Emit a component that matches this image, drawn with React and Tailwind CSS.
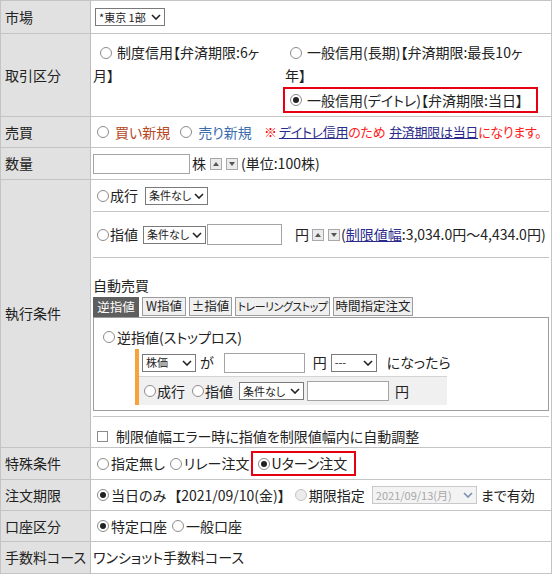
import React from 'react';

const Radio = ({ checked, disabled, className = '' }) => (
  <span
    className={`inline-flex items-center justify-center shrink-0 w-[12px] h-[12px] rounded-full border ${
      disabled ? 'border-[#c4c4c4] bg-[#ececec]' : 'border-[#8c8c8c] bg-white'
    } ${className}`}
  >
    {checked && <span className="w-[6px] h-[6px] rounded-full bg-[#222]" />}
  </span>
);

const Chevron = ({ color = '#222' }) => (
  <svg width="10" height="6" viewBox="0 0 10 6" className="shrink-0">
    <path d="M1 1L5 5L9 1" fill="none" stroke={color} strokeWidth="1.6" />
  </svg>
);

const Select = ({ label, className = '', disabled }) => (
  <span
    className={`inline-flex items-center justify-between shrink-0 h-[18px] border px-[3px] text-[11px] leading-none ${
      disabled ? 'border-[#c8c8c8] bg-[#f3f3f3] text-[#a8a8a8]' : 'border-[#7a7a7a] bg-white text-[#222]'
    } ${className}`}
  >
    <span className="whitespace-nowrap">{label}</span>
    <Chevron color={disabled ? '#7d8fb0' : '#222'} />
  </span>
);

const Input = ({ className = '' }) => (
  <span className={`inline-block shrink-0 h-[20px] border border-[#a4a4a4] bg-white ${className}`} />
);

const Spin = ({ up, className = '' }) => (
  <span
    className={`inline-flex items-center justify-center shrink-0 w-[12px] h-[12px] border border-[#a8a8a8] bg-[#ebebeb] ${className}`}
  >
    <svg width="6" height="4" viewBox="0 0 6 4">
      <path d={up ? 'M0 4L3 0L6 4Z' : 'M0 0L3 4L6 0Z'} fill="#555" />
    </svg>
  </span>
);

const Row = ({ label, h, children, className = '' }) => (
  <div className={`flex border-b border-[#c4c4c4] ${h}`}>
    <div className="w-[90px] shrink-0 bg-[#e1e1e1] border-r border-[#bdbdbd] flex items-center pl-[4px] whitespace-nowrap">
      {label}
    </div>
    <div className={`flex-1 min-w-0 ${className}`}>{children}</div>
  </div>
);

const Tab = ({ children, active, className = '', size = 'text-[12.5px]' }) => (
  <span
    className={`inline-flex items-center justify-center shrink-0 overflow-hidden whitespace-nowrap ${size} ${
      active
        ? 'h-[20px] bg-[#5e5e5e] text-white border border-[#5e5e5e]'
        : 'h-[19px] mb-[1px] bg-[#f0f0f0] border border-[#9c9c9c] text-[#222]'
    } ${className}`}
  >
    {children}
  </span>
);

export default function App() {
  return (
    <div className="w-[552px] h-[574px] overflow-hidden bg-white text-[14px] text-[#222] font-['Noto_Sans_CJK_JP',sans-serif] [font-feature-settings:'palt'] border-l border-r border-t border-[#c4c4c4]">
      <Row label="市場" h="h-[33px]" className="flex items-center pl-[4px]">
        <Select label="*東京 1部" className="w-[70px] h-[17px]" />
      </Row>

      <Row label="取引区分" h="h-[83px]" className="grid grid-cols-[192px_1fr] pt-[7px] leading-[23px]">
        <div>
          <div className="flex items-center h-[23px] pl-[9px] whitespace-nowrap">
            <Radio className="mr-[5px]" />
            <span>制度信用【弁済期限:6ヶ</span>
          </div>
          <div className="h-[23px] pl-[2px]">月】</div>
        </div>
        <div>
          <div className="flex items-center h-[23px] pl-[7px] whitespace-nowrap">
            <Radio className="mr-[5px]" />
            <span>一般信用(長期)【弁済期限:最長10ヶ</span>
          </div>
          <div className="h-[23px] pl-[2px]">年】</div>
          <div className="flex items-center h-[26px] w-[255px] border-2 border-[#e60012] pl-[5px] whitespace-nowrap">
            <Radio checked className="mr-[5px]" />
            <span>一般信用(デイトレ)【弁済期限:当日】</span>
          </div>
        </div>
      </Row>

      <Row label="売買" h="h-[31px]" className="flex items-center pl-[6px] whitespace-nowrap">
        <Radio className="mr-[6px]" />
        <span className="text-[#b8461e]">買い新規</span>
        <Radio className="ml-[10px] mr-[6px]" />
        <span className="text-[#3b6cb0]">売り新規</span>
        <span className="ml-[12px] text-[#ff0000] text-[13px]">※</span>
        <span className="ml-[2px] text-[13px] tracking-[-0.3px]">
          <span className="text-[#2b2b8c] underline">デイトレ信用</span>
          <span className="text-[#ff2020]">のため</span>
          <span className="ml-[4px] text-[#2b2b8c] underline">弁済期限は当日</span>
          <span className="text-[#ff2020]">になります。</span>
        </span>
      </Row>

      <Row label="数量" h="h-[32px]" className="flex items-center pl-[2px] whitespace-nowrap">
        <Input className="w-[97px]" />
        <span className="ml-[2px]">株</span>
        <Spin up className="ml-[4px]" />
        <Spin className="ml-[4px]" />
        <span className="ml-[3px]">(単位:100株)</span>
      </Row>

      <Row label="執行条件" h="h-[268px]" className="flex flex-col px-[2px]">
        <div className="h-[32px] shrink-0 border-b border-[#c4c4c4] flex items-center pl-[4px] whitespace-nowrap">
          <Radio className="mr-[1px]" />
          <span>成行</span>
          <Select label="条件なし" className="ml-[7px] w-[63px]" />
        </div>

        <div className="h-[46px] shrink-0 border-b border-[#c4c4c4] flex items-center pl-[4px] whitespace-nowrap">
          <Radio className="mr-[1px]" />
          <span>指値</span>
          <Select label="条件なし" className="ml-[5px] w-[63px]" />
          <Input className="ml-[1px] w-[75px] h-[21px]" />
          <span className="ml-[13px]">円</span>
          <Spin up className="ml-[3px]" />
          <Spin className="ml-[4px]" />
          <span className="ml-[1px]">
            (<span className="text-[#2b2b8c] underline">制限値幅</span>:3,034.0円〜4,434.0円)
          </span>
        </div>

        <div className="h-[159px] shrink-0 border-b border-[#c4c4c4] pt-[19px]">
          <div className="leading-[16px] whitespace-nowrap">自動売買</div>
          <div className="flex items-end gap-[3px] mt-[4px] h-[20px]">
            <Tab active className="w-[46px]">逆指値</Tab>
            <Tab className="w-[44px]">W指値</Tab>
            <Tab className="w-[43px]">±指値</Tab>
            <Tab className="w-[95px] tracking-[-0.5px]" size="text-[11px]">トレーリングストップ</Tab>
            <Tab className="w-[80px]">時間指定注文</Tab>
          </div>
          <div className="h-[94px] border border-[#9c9c9c] bg-white">
            <div className="flex items-center h-[20px] mt-[9px] pl-[9px] whitespace-nowrap">
              <Radio className="mr-[2px]" />
              <span>逆指値(ストップロス)</span>
            </div>
            <div className="ml-[41px] mt-[2px] w-[312px] border-l-4 border-[#f8a23a]">
              <div className="h-[28px] border-b border-[#d4d4d4] flex items-center pl-[3px] whitespace-nowrap">
                <Select label="株価" className="w-[54px]" />
                <span className="ml-[4px]">が</span>
                <Input className="ml-[10px] w-[81px]" />
                <span className="ml-[8px]">円</span>
                <Select label="---" className="ml-[4px] w-[46px] h-[17px]" />
                <span className="ml-[10px]">になったら</span>
              </div>
              <div className="h-[28px] bg-[#f0f0f0] flex items-center pl-[5px] whitespace-nowrap">
                <Radio className="mr-[1px]" />
                <span>成行</span>
                <Radio className="ml-[7px] mr-[1px]" />
                <span>指値</span>
                <Select label="条件なし" className="ml-[6px] w-[65px]" />
                <Input className="ml-[3px] w-[82px]" />
                <span className="ml-[6px]">円</span>
              </div>
            </div>
          </div>
        </div>

        <div className="h-[30px] shrink-0 flex items-center pl-[4px] pt-[8px] whitespace-nowrap">
          <span className="inline-block w-[11px] h-[11px] border border-[#8c8c8c] bg-white mr-[8px]" />
          <span>制限値幅エラー時に指値を制限値幅内に自動調整</span>
        </div>
      </Row>

      <Row label="特殊条件" h="h-[32px]" className="flex items-center pl-[6px] whitespace-nowrap">
        <Radio className="mr-[2px]" />
        <span>指定無し</span>
        <Radio className="ml-[5px] mr-[2px]" />
        <span>リレー注文</span>
        <span className="ml-[2px] flex items-center h-[25px] w-[105px] border-2 border-[#e60012] pl-[5px]">
          <Radio checked className="mr-[1px]" />
          <span>Uターン注文</span>
        </span>
      </Row>

      <Row label="注文期限" h="h-[31px]" className="flex items-center pl-[6px] whitespace-nowrap">
        <Radio checked className="mr-[2px]" />
        <span>当日のみ</span>
        <span className="ml-[8px]">【2021/09/10(金)】</span>
        <Radio disabled className="ml-[10px] mr-[2px]" />
        <span>期限指定</span>
        <Select disabled label="2021/09/13(月)" className="ml-[7px] w-[105px]" />
        <span className="ml-[4px]">まで有効</span>
      </Row>

      <Row label="口座区分" h="h-[31px]" className="flex items-center pl-[6px] whitespace-nowrap">
        <Radio checked className="mr-[2px]" />
        <span>特定口座</span>
        <Radio className="ml-[5px] mr-[2px]" />
        <span>一般口座</span>
      </Row>

      <Row label="手数料コース" h="h-[32px]" className="flex items-center pl-[2px] whitespace-nowrap">
        ワンショット手数料コース
      </Row>
    </div>
  );
}
